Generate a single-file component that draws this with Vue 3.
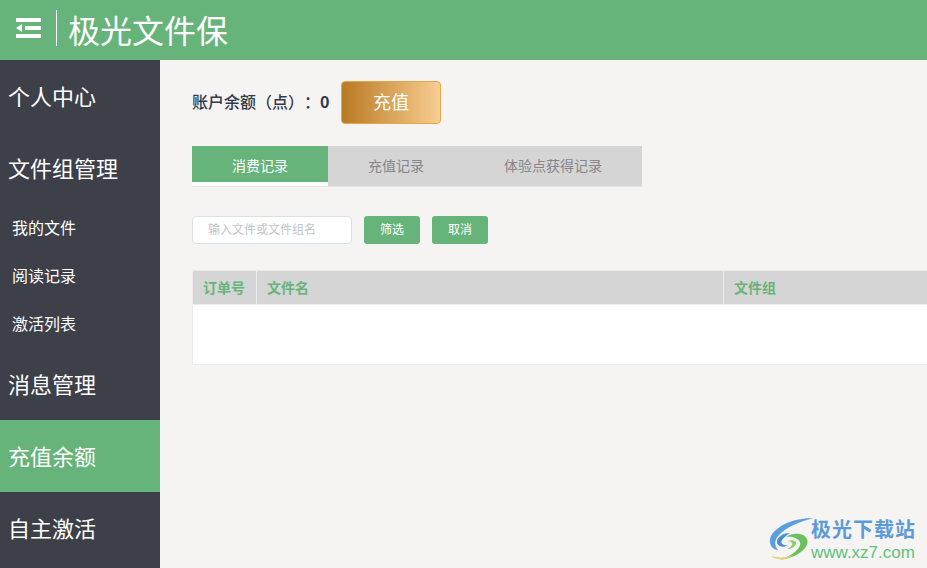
<script setup>
const subItems = ['我的文件', '阅读记录', '激活列表']
const tabs = ['消费记录', '充值记录', '体验点获得记录']
const columns = ['订单号', '文件名', '文件组']
</script>

<template>
  <div class="app">
    <header class="topbar">
      <svg class="menu-icon" width="26" height="20" viewBox="0 0 26 20" aria-hidden="true">
        <rect x="1" y="0" width="25" height="4" fill="#fff" />
        <rect x="1" y="16" width="25" height="4" fill="#fff" />
        <rect x="10" y="8" width="16" height="4" fill="#fff" />
        <path d="M1 10 L7 6 V14 Z" fill="#fff" />
      </svg>
      <span class="divider"></span>
      <h1 class="title">极光文件保</h1>
    </header>
    <div class="body">
      <nav class="sidebar">
        <a class="nav">个人中心</a>
        <a class="nav">文件组管理</a>
        <a v-for="s in subItems" :key="s" class="sub">{{ s }}</a>
        <a class="nav">消息管理</a>
        <a class="nav active">充值余额</a>
        <a class="nav">自主激活</a>
      </nav>
      <main class="content">
        <div class="balance">
          <span class="balance-label">账户余额（点）：<b>0</b></span>
          <button class="recharge">充值</button>
        </div>
        <div class="tabs">
          <div v-for="(t, i) in tabs" :key="t" class="tab" :class="{ on: i === 0 }">{{ t }}</div>
        </div>
        <div class="filter">
          <input class="search" placeholder="输入文件或文件组名" />
          <button class="btn">筛选</button>
          <button class="btn">取消</button>
        </div>
        <div class="table">
          <div class="thead">
            <div v-for="c in columns" :key="c" class="th">{{ c }}</div>
          </div>
          <div class="tbody"></div>
        </div>
      </main>
    </div>
    <div class="watermark">
      <svg width="46" height="46" viewBox="0 0 46 46" aria-hidden="true">
        <path d="M45 2 C28 2 10 8 3 20 C0 27 3 33 10 34 C6 29 6 24 12 18 C20 10 32 6 45 2 Z" fill="#5b9fdc" />
        <path d="M22 17 C14 17 8 22 9 27 C10 31 16 32 20 29 C15 30 12 27 14 24 C16 21 19 19 22 17 Z" fill="#4b8fc9" />
        <path d="M18 21 C25 16 36 17 39 23 C42 30 32 41 12 44 C26 39 34 31 32 26 C30 22 24 20 18 21 Z" fill="#6cbf5a" />
        <path d="M20 25 C25 23 29 25 28 28 C27 31 23 33 19 33 C23 31 25 29 24 27 C23 26 22 25 20 25 Z" fill="#8fce6a" />
        <path d="M3 40 C10 42 18 42 26 39 C18 44 9 45 3 40 Z" fill="#e6cf6a" />
      </svg>
      <div class="wm-text">
        <div class="wm-cn">极光下载站</div>
        <div class="wm-en">www.xz7.com</div>
      </div>
    </div>
  </div>
</template>

<style>
html, body { margin: 0; overflow: hidden; }
</style>

<style scoped>
.app {
  position: relative;
  width: 927px;
  height: 568px;
  overflow: hidden;
  background: #f5f4f3;
  font-family: "Noto Sans CJK SC", "Liberation Sans", sans-serif;
  text-spacing-trim: space-all;
}
.topbar {
  height: 60px;
  background: #66b47a;
  display: flex;
  align-items: center;
  padding-left: 15px;
  box-sizing: border-box;
}
.menu-icon { margin-bottom: 4px; }
.divider {
  width: 1px;
  height: 36px;
  background: #fff;
  margin: 0 0 4px 15px;
}
.title {
  margin: 0 0 3px 11px;
  font-size: 32px;
  font-weight: 400;
  color: #fff;
  line-height: 56px;
}
.body { display: flex; height: 508px; }
.sidebar {
  width: 160px;
  flex: none;
  background: #3e4049;
  display: flex;
  flex-direction: column;
}
.nav {
  height: 72px;
  line-height: 70px;
  padding-left: 8px;
  font-size: 22px;
  color: #fff;
}
.nav.active { background: #66b47a; }
.sub {
  height: 48px;
  line-height: 46px;
  padding-left: 12px;
  font-size: 16px;
  color: #fff;
}
.content {
  flex: 1;
  min-width: 0;
  padding: 21px 0 0 32px;
}
.balance { display: flex; align-items: center; height: 43px; }
.balance-label {
  width: 149px;
  font-size: 16px;
  font-weight: 500;
  line-height: 40px;
  padding-bottom: 3px;
  color: #2f3a4a;
  white-space: nowrap;
}
.recharge {
  width: 100px;
  height: 43px;
  box-sizing: border-box;
  border: 1px solid #e8a647;
  border-radius: 4px;
  background: linear-gradient(90deg, #b97a23, #f8cd92);
  color: #fff;
  font: inherit;
  font-size: 18px;
  padding: 0 0 3px;
}
.tabs {
  margin-top: 22px;
  width: 450px;
  display: flex;
  height: 41px;
  box-sizing: border-box;
  border-bottom: 1px solid #e4e4e6;
  background: #d5d5d5;
}
.tab {
  padding: 0 40px;
  font-size: 14px;
  line-height: 38px;
  color: #85858a;
  white-space: nowrap;
}
.tab.on {
  height: 36px;
  color: #fff;
  background: #66b47a;
  border-bottom: 4px solid #fff;
}
.filter {
  margin-top: 29px;
  display: flex;
  gap: 12px;
  height: 28px;
}
.search {
  width: 160px;
  height: 28px;
  box-sizing: border-box;
  border: 1px solid #dcdfe6;
  border-radius: 4px;
  background: #fff;
  padding: 0 15px 3px;
  font: inherit;
  font-size: 12px;
  outline: none;
}
.search::placeholder { color: #c0c4cc; }
.btn {
  width: 56px;
  height: 28px;
  border: 0;
  border-radius: 3px;
  background: #66b47a;
  color: #fff;
  font: inherit;
  font-size: 12px;
  padding: 0 0 3px;
}
.table {
  margin-top: 26px;
  width: 1000px;
  border: 1px solid #ebebf0;
  box-sizing: border-box;
}
.thead {
  display: grid;
  grid-template-columns: 63px 467px 1fr;
  height: 34px;
  background: #d5d5d5;
  border-bottom: 1px solid #ebebf0;
  box-sizing: border-box;
}
.th {
  padding-left: 10px;
  font-size: 14px;
  font-weight: 700;
  line-height: 33px;
  color: #66b47a;
  border-left: 1px solid #ebebf0;
}
.th:first-child { border-left: 0; }
.tbody { height: 59px; background: #fff; }
.watermark {
  position: absolute;
  right: 11px;
  bottom: 6px;
  display: flex;
  align-items: center;
}
.wm-text {
  margin-left: -3px;
  display: flex;
  flex-direction: column;
  gap: 3px;
}
.wm-cn {
  font-size: 20px;
  font-weight: 700;
  line-height: 24px;
  color: #5b9bd8;
  letter-spacing: 1px;
}
.wm-en {
  font-family: "Liberation Sans", sans-serif;
  font-size: 17px;
  line-height: 17px;
  color: #62c07c;
}
</style>
